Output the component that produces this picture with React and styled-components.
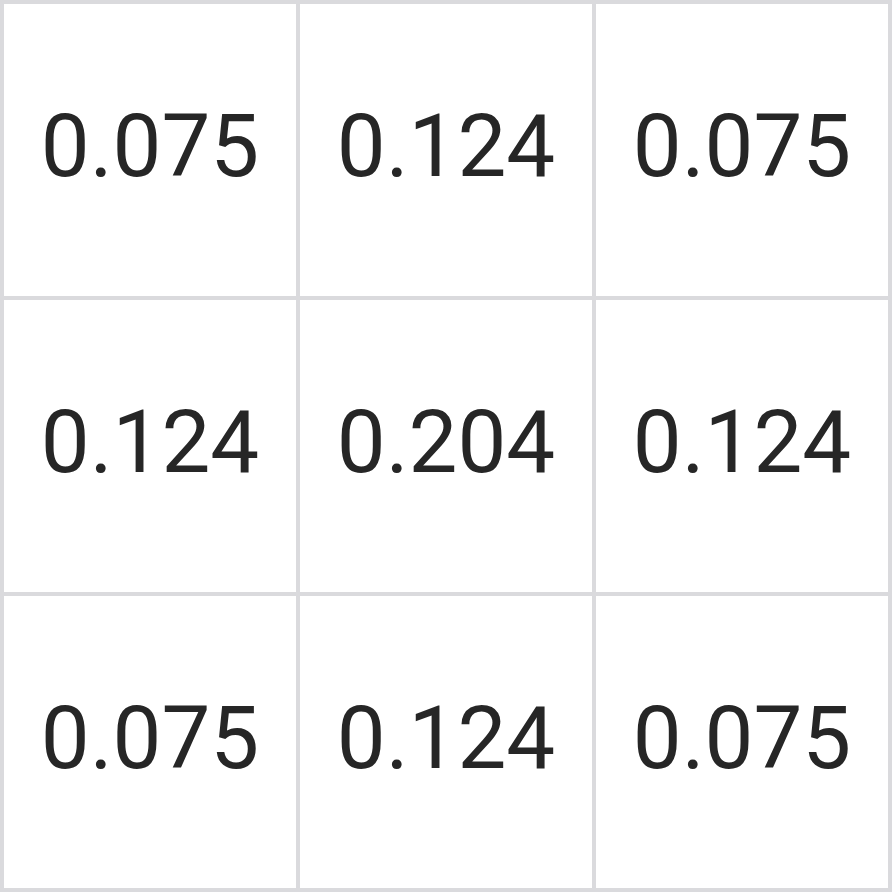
import React from 'react'
import styled, { createGlobalStyle } from 'styled-components'

const GlobalStyle = createGlobalStyle`
    html, body {
        margin: 0;
        padding: 0;
        background: #ffffff;
    }
`

const Grid = styled.div`
    display: grid;
    grid-template-columns: repeat(3, 1fr);
    grid-template-rows: repeat(3, 1fr);
    gap: 4px;
    padding: 4px;
    width: 892px;
    height: 892px;
    box-sizing: border-box;
    background-color: #dadadd;
`

const Cell = styled.div`
    display: flex;
    align-items: center;
    justify-content: center;
    padding-bottom: 7px;
    background-color: #ffffff;
    color: #262626;
    font-family: Roboto, 'Noto Sans', sans-serif;
    font-size: 87px;
    font-weight: 400;
    line-height: 1;
`

const weights = [
    [0.075, 0.124, 0.075],
    [0.124, 0.204, 0.124],
    [0.075, 0.124, 0.075]
]

export default function App() {
    return (
        <>
            <GlobalStyle />
            <Grid>
                {weights.flat().map((w, i) => (
                    <Cell key={i}>{w.toFixed(3)}</Cell>
                ))}
            </Grid>
        </>
    )
}
